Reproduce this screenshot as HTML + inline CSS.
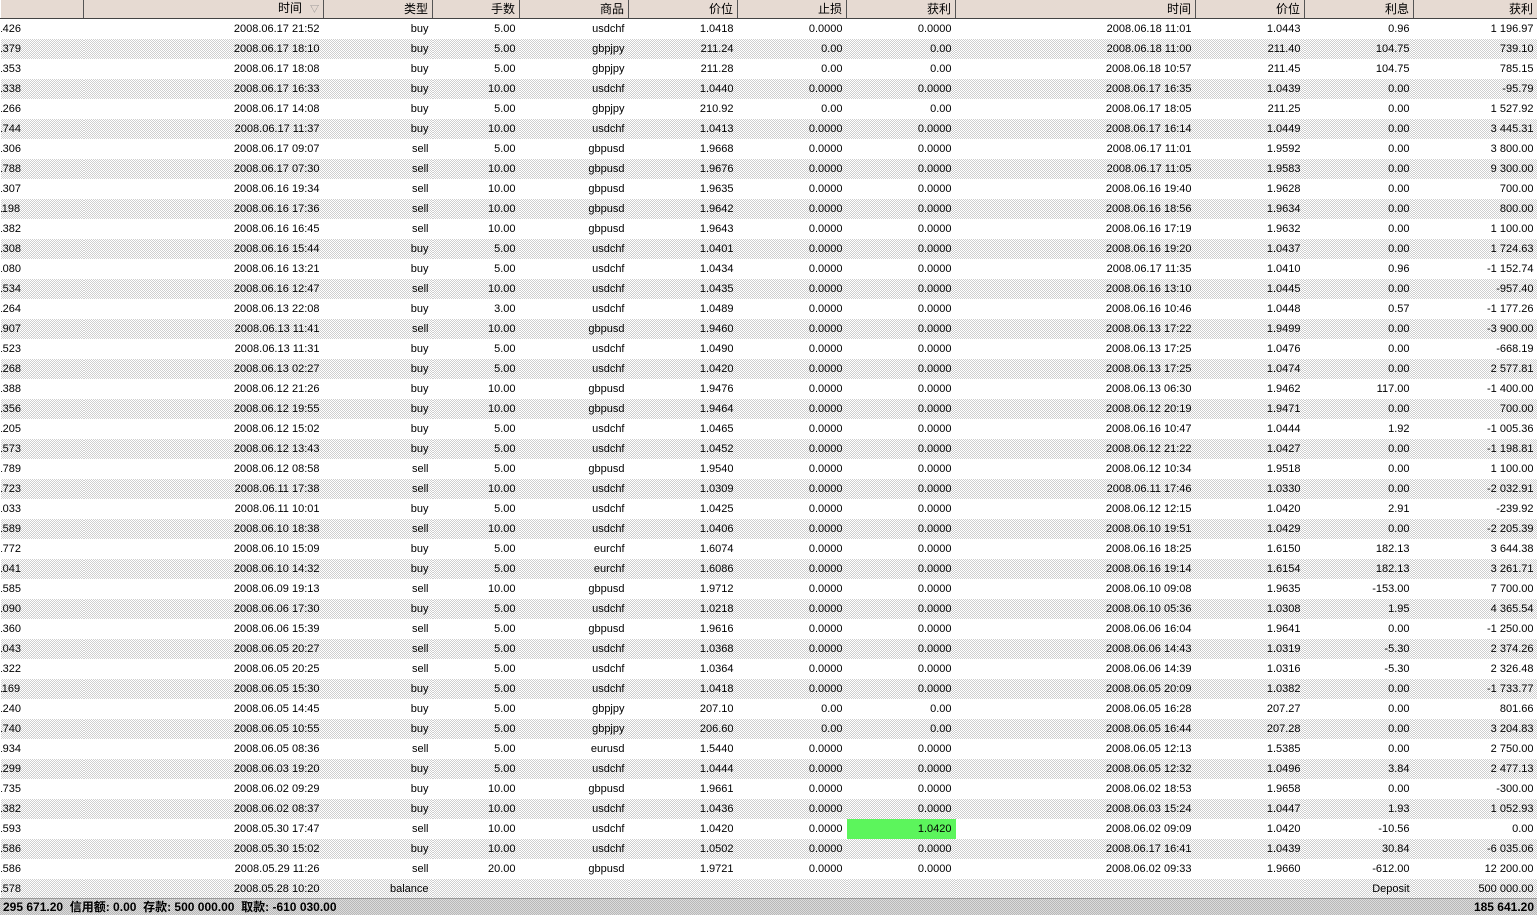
<!DOCTYPE html>
<html><head><meta charset="utf-8"><style>
*{margin:0;padding:0;box-sizing:border-box}
body{width:1537px;height:915px;overflow:hidden;background:#fff;font-family:"Liberation Sans","Noto Sans CJK SC",sans-serif;font-size:11px;color:#000}
table{border-collapse:collapse;table-layout:fixed;width:1537px;position:absolute;left:0;top:0}
th{height:18px;font-weight:normal;text-align:right;padding-right:4px;background:repeating-conic-gradient(#d8c8c0 0 25%,#f4ece4 0 50%) 0 0/2px 2px;border-right:1px solid #555;border-left:1px solid #fff;border-bottom:1px solid #444;font-size:12px;line-height:17px;white-space:nowrap;overflow:hidden}
td{height:20px;line-height:20px;text-align:right;padding-right:4px;white-space:nowrap;overflow:hidden}
td:first-child{text-align:left;padding:0;text-indent:-4px}
tr:nth-child(odd) td{background:repeating-conic-gradient(#cfcfcf 0 25%,#fff 0 50%) 0 0/2px 2px}
td.g{background:#5cf55c!important}
.foot{position:absolute;left:0;top:898px;width:1537px;height:17px;background:repeating-conic-gradient(#b8b8b8 0 25%,#dcdcdc 0 50%) 0 0/2px 2px;font-weight:bold;line-height:17px;font-size:12px;border-top:1px solid #999}
.foot .l{position:absolute;left:3px}.foot .r{position:absolute;right:3px}
.tri{color:#888;font-size:9px;margin-left:8px}
</style></head><body>
<table>
<colgroup><col style="width:83px"><col style="width:240px"><col style="width:109px"><col style="width:87px"><col style="width:109px"><col style="width:109px"><col style="width:109px"><col style="width:109px"><col style="width:240px"><col style="width:109px"><col style="width:109px"><col style="width:124px"></colgroup>
<tr><th></th><th>时间<span class="tri">▽</span></th><th>类型</th><th>手数</th><th>商品</th><th>价位</th><th>止损</th><th>获利</th><th>时间</th><th>价位</th><th>利息</th><th>获利</th></tr>
<tr><td>1426</td><td>2008.06.17 21:52</td><td>buy</td><td>5.00</td><td>usdchf</td><td>1.0418</td><td>0.0000</td><td>0.0000</td><td>2008.06.18 11:01</td><td>1.0443</td><td>0.96</td><td>1 196.97</td></tr>
<tr><td>1379</td><td>2008.06.17 18:10</td><td>buy</td><td>5.00</td><td>gbpjpy</td><td>211.24</td><td>0.00</td><td>0.00</td><td>2008.06.18 11:00</td><td>211.40</td><td>104.75</td><td>739.10</td></tr>
<tr><td>1353</td><td>2008.06.17 18:08</td><td>buy</td><td>5.00</td><td>gbpjpy</td><td>211.28</td><td>0.00</td><td>0.00</td><td>2008.06.18 10:57</td><td>211.45</td><td>104.75</td><td>785.15</td></tr>
<tr><td>1338</td><td>2008.06.17 16:33</td><td>buy</td><td>10.00</td><td>usdchf</td><td>1.0440</td><td>0.0000</td><td>0.0000</td><td>2008.06.17 16:35</td><td>1.0439</td><td>0.00</td><td>-95.79</td></tr>
<tr><td>1266</td><td>2008.06.17 14:08</td><td>buy</td><td>5.00</td><td>gbpjpy</td><td>210.92</td><td>0.00</td><td>0.00</td><td>2008.06.17 18:05</td><td>211.25</td><td>0.00</td><td>1 527.92</td></tr>
<tr><td>1744</td><td>2008.06.17 11:37</td><td>buy</td><td>10.00</td><td>usdchf</td><td>1.0413</td><td>0.0000</td><td>0.0000</td><td>2008.06.17 16:14</td><td>1.0449</td><td>0.00</td><td>3 445.31</td></tr>
<tr><td>1306</td><td>2008.06.17 09:07</td><td>sell</td><td>5.00</td><td>gbpusd</td><td>1.9668</td><td>0.0000</td><td>0.0000</td><td>2008.06.17 11:01</td><td>1.9592</td><td>0.00</td><td>3 800.00</td></tr>
<tr><td>1788</td><td>2008.06.17 07:30</td><td>sell</td><td>10.00</td><td>gbpusd</td><td>1.9676</td><td>0.0000</td><td>0.0000</td><td>2008.06.17 11:05</td><td>1.9583</td><td>0.00</td><td>9 300.00</td></tr>
<tr><td>1307</td><td>2008.06.16 19:34</td><td>sell</td><td>10.00</td><td>gbpusd</td><td>1.9635</td><td>0.0000</td><td>0.0000</td><td>2008.06.16 19:40</td><td>1.9628</td><td>0.00</td><td>700.00</td></tr>
<tr><td>1198</td><td>2008.06.16 17:36</td><td>sell</td><td>10.00</td><td>gbpusd</td><td>1.9642</td><td>0.0000</td><td>0.0000</td><td>2008.06.16 18:56</td><td>1.9634</td><td>0.00</td><td>800.00</td></tr>
<tr><td>1382</td><td>2008.06.16 16:45</td><td>sell</td><td>10.00</td><td>gbpusd</td><td>1.9643</td><td>0.0000</td><td>0.0000</td><td>2008.06.16 17:19</td><td>1.9632</td><td>0.00</td><td>1 100.00</td></tr>
<tr><td>1308</td><td>2008.06.16 15:44</td><td>buy</td><td>5.00</td><td>usdchf</td><td>1.0401</td><td>0.0000</td><td>0.0000</td><td>2008.06.16 19:20</td><td>1.0437</td><td>0.00</td><td>1 724.63</td></tr>
<tr><td>1080</td><td>2008.06.16 13:21</td><td>buy</td><td>5.00</td><td>usdchf</td><td>1.0434</td><td>0.0000</td><td>0.0000</td><td>2008.06.17 11:35</td><td>1.0410</td><td>0.96</td><td>-1 152.74</td></tr>
<tr><td>1534</td><td>2008.06.16 12:47</td><td>sell</td><td>10.00</td><td>usdchf</td><td>1.0435</td><td>0.0000</td><td>0.0000</td><td>2008.06.16 13:10</td><td>1.0445</td><td>0.00</td><td>-957.40</td></tr>
<tr><td>1264</td><td>2008.06.13 22:08</td><td>buy</td><td>3.00</td><td>usdchf</td><td>1.0489</td><td>0.0000</td><td>0.0000</td><td>2008.06.16 10:46</td><td>1.0448</td><td>0.57</td><td>-1 177.26</td></tr>
<tr><td>1907</td><td>2008.06.13 11:41</td><td>sell</td><td>10.00</td><td>gbpusd</td><td>1.9460</td><td>0.0000</td><td>0.0000</td><td>2008.06.13 17:22</td><td>1.9499</td><td>0.00</td><td>-3 900.00</td></tr>
<tr><td>1523</td><td>2008.06.13 11:31</td><td>buy</td><td>5.00</td><td>usdchf</td><td>1.0490</td><td>0.0000</td><td>0.0000</td><td>2008.06.13 17:25</td><td>1.0476</td><td>0.00</td><td>-668.19</td></tr>
<tr><td>1268</td><td>2008.06.13 02:27</td><td>buy</td><td>5.00</td><td>usdchf</td><td>1.0420</td><td>0.0000</td><td>0.0000</td><td>2008.06.13 17:25</td><td>1.0474</td><td>0.00</td><td>2 577.81</td></tr>
<tr><td>1388</td><td>2008.06.12 21:26</td><td>buy</td><td>10.00</td><td>gbpusd</td><td>1.9476</td><td>0.0000</td><td>0.0000</td><td>2008.06.13 06:30</td><td>1.9462</td><td>117.00</td><td>-1 400.00</td></tr>
<tr><td>1356</td><td>2008.06.12 19:55</td><td>buy</td><td>10.00</td><td>gbpusd</td><td>1.9464</td><td>0.0000</td><td>0.0000</td><td>2008.06.12 20:19</td><td>1.9471</td><td>0.00</td><td>700.00</td></tr>
<tr><td>1205</td><td>2008.06.12 15:02</td><td>buy</td><td>5.00</td><td>usdchf</td><td>1.0465</td><td>0.0000</td><td>0.0000</td><td>2008.06.16 10:47</td><td>1.0444</td><td>1.92</td><td>-1 005.36</td></tr>
<tr><td>1573</td><td>2008.06.12 13:43</td><td>buy</td><td>5.00</td><td>usdchf</td><td>1.0452</td><td>0.0000</td><td>0.0000</td><td>2008.06.12 21:22</td><td>1.0427</td><td>0.00</td><td>-1 198.81</td></tr>
<tr><td>1789</td><td>2008.06.12 08:58</td><td>sell</td><td>5.00</td><td>gbpusd</td><td>1.9540</td><td>0.0000</td><td>0.0000</td><td>2008.06.12 10:34</td><td>1.9518</td><td>0.00</td><td>1 100.00</td></tr>
<tr><td>1723</td><td>2008.06.11 17:38</td><td>sell</td><td>10.00</td><td>usdchf</td><td>1.0309</td><td>0.0000</td><td>0.0000</td><td>2008.06.11 17:46</td><td>1.0330</td><td>0.00</td><td>-2 032.91</td></tr>
<tr><td>1033</td><td>2008.06.11 10:01</td><td>buy</td><td>5.00</td><td>usdchf</td><td>1.0425</td><td>0.0000</td><td>0.0000</td><td>2008.06.12 12:15</td><td>1.0420</td><td>2.91</td><td>-239.92</td></tr>
<tr><td>1589</td><td>2008.06.10 18:38</td><td>sell</td><td>10.00</td><td>usdchf</td><td>1.0406</td><td>0.0000</td><td>0.0000</td><td>2008.06.10 19:51</td><td>1.0429</td><td>0.00</td><td>-2 205.39</td></tr>
<tr><td>1772</td><td>2008.06.10 15:09</td><td>buy</td><td>5.00</td><td>eurchf</td><td>1.6074</td><td>0.0000</td><td>0.0000</td><td>2008.06.16 18:25</td><td>1.6150</td><td>182.13</td><td>3 644.38</td></tr>
<tr><td>1041</td><td>2008.06.10 14:32</td><td>buy</td><td>5.00</td><td>eurchf</td><td>1.6086</td><td>0.0000</td><td>0.0000</td><td>2008.06.16 19:14</td><td>1.6154</td><td>182.13</td><td>3 261.71</td></tr>
<tr><td>1585</td><td>2008.06.09 19:13</td><td>sell</td><td>10.00</td><td>gbpusd</td><td>1.9712</td><td>0.0000</td><td>0.0000</td><td>2008.06.10 09:08</td><td>1.9635</td><td>-153.00</td><td>7 700.00</td></tr>
<tr><td>1090</td><td>2008.06.06 17:30</td><td>buy</td><td>5.00</td><td>usdchf</td><td>1.0218</td><td>0.0000</td><td>0.0000</td><td>2008.06.10 05:36</td><td>1.0308</td><td>1.95</td><td>4 365.54</td></tr>
<tr><td>1360</td><td>2008.06.06 15:39</td><td>sell</td><td>5.00</td><td>gbpusd</td><td>1.9616</td><td>0.0000</td><td>0.0000</td><td>2008.06.06 16:04</td><td>1.9641</td><td>0.00</td><td>-1 250.00</td></tr>
<tr><td>1043</td><td>2008.06.05 20:27</td><td>sell</td><td>5.00</td><td>usdchf</td><td>1.0368</td><td>0.0000</td><td>0.0000</td><td>2008.06.06 14:43</td><td>1.0319</td><td>-5.30</td><td>2 374.26</td></tr>
<tr><td>1322</td><td>2008.06.05 20:25</td><td>sell</td><td>5.00</td><td>usdchf</td><td>1.0364</td><td>0.0000</td><td>0.0000</td><td>2008.06.06 14:39</td><td>1.0316</td><td>-5.30</td><td>2 326.48</td></tr>
<tr><td>1169</td><td>2008.06.05 15:30</td><td>buy</td><td>5.00</td><td>usdchf</td><td>1.0418</td><td>0.0000</td><td>0.0000</td><td>2008.06.05 20:09</td><td>1.0382</td><td>0.00</td><td>-1 733.77</td></tr>
<tr><td>1240</td><td>2008.06.05 14:45</td><td>buy</td><td>5.00</td><td>gbpjpy</td><td>207.10</td><td>0.00</td><td>0.00</td><td>2008.06.05 16:28</td><td>207.27</td><td>0.00</td><td>801.66</td></tr>
<tr><td>1740</td><td>2008.06.05 10:55</td><td>buy</td><td>5.00</td><td>gbpjpy</td><td>206.60</td><td>0.00</td><td>0.00</td><td>2008.06.05 16:44</td><td>207.28</td><td>0.00</td><td>3 204.83</td></tr>
<tr><td>1934</td><td>2008.06.05 08:36</td><td>sell</td><td>5.00</td><td>eurusd</td><td>1.5440</td><td>0.0000</td><td>0.0000</td><td>2008.06.05 12:13</td><td>1.5385</td><td>0.00</td><td>2 750.00</td></tr>
<tr><td>1299</td><td>2008.06.03 19:20</td><td>buy</td><td>5.00</td><td>usdchf</td><td>1.0444</td><td>0.0000</td><td>0.0000</td><td>2008.06.05 12:32</td><td>1.0496</td><td>3.84</td><td>2 477.13</td></tr>
<tr><td>1735</td><td>2008.06.02 09:29</td><td>buy</td><td>10.00</td><td>gbpusd</td><td>1.9661</td><td>0.0000</td><td>0.0000</td><td>2008.06.02 18:53</td><td>1.9658</td><td>0.00</td><td>-300.00</td></tr>
<tr><td>1382</td><td>2008.06.02 08:37</td><td>buy</td><td>10.00</td><td>usdchf</td><td>1.0436</td><td>0.0000</td><td>0.0000</td><td>2008.06.03 15:24</td><td>1.0447</td><td>1.93</td><td>1 052.93</td></tr>
<tr><td>1593</td><td>2008.05.30 17:47</td><td>sell</td><td>10.00</td><td>usdchf</td><td>1.0420</td><td>0.0000</td><td class="g">1.0420</td><td>2008.06.02 09:09</td><td>1.0420</td><td>-10.56</td><td>0.00</td></tr>
<tr><td>1586</td><td>2008.05.30 15:02</td><td>buy</td><td>10.00</td><td>usdchf</td><td>1.0502</td><td>0.0000</td><td>0.0000</td><td>2008.06.17 16:41</td><td>1.0439</td><td>30.84</td><td>-6 035.06</td></tr>
<tr><td>1586</td><td>2008.05.29 11:26</td><td>sell</td><td>20.00</td><td>gbpusd</td><td>1.9721</td><td>0.0000</td><td>0.0000</td><td>2008.06.02 09:33</td><td>1.9660</td><td>-612.00</td><td>12 200.00</td></tr>
<tr><td>1578</td><td>2008.05.28 10:20</td><td>balance</td><td></td><td></td><td></td><td></td><td></td><td></td><td></td><td>Deposit</td><td>500 000.00</td></tr>
</table>
<div class="foot"><span class="l">295 671.20&nbsp; 信用额: 0.00&nbsp; 存款: 500 000.00&nbsp; 取款: -610 030.00</span><span class="r">185 641.20</span></div>
</body></html>
